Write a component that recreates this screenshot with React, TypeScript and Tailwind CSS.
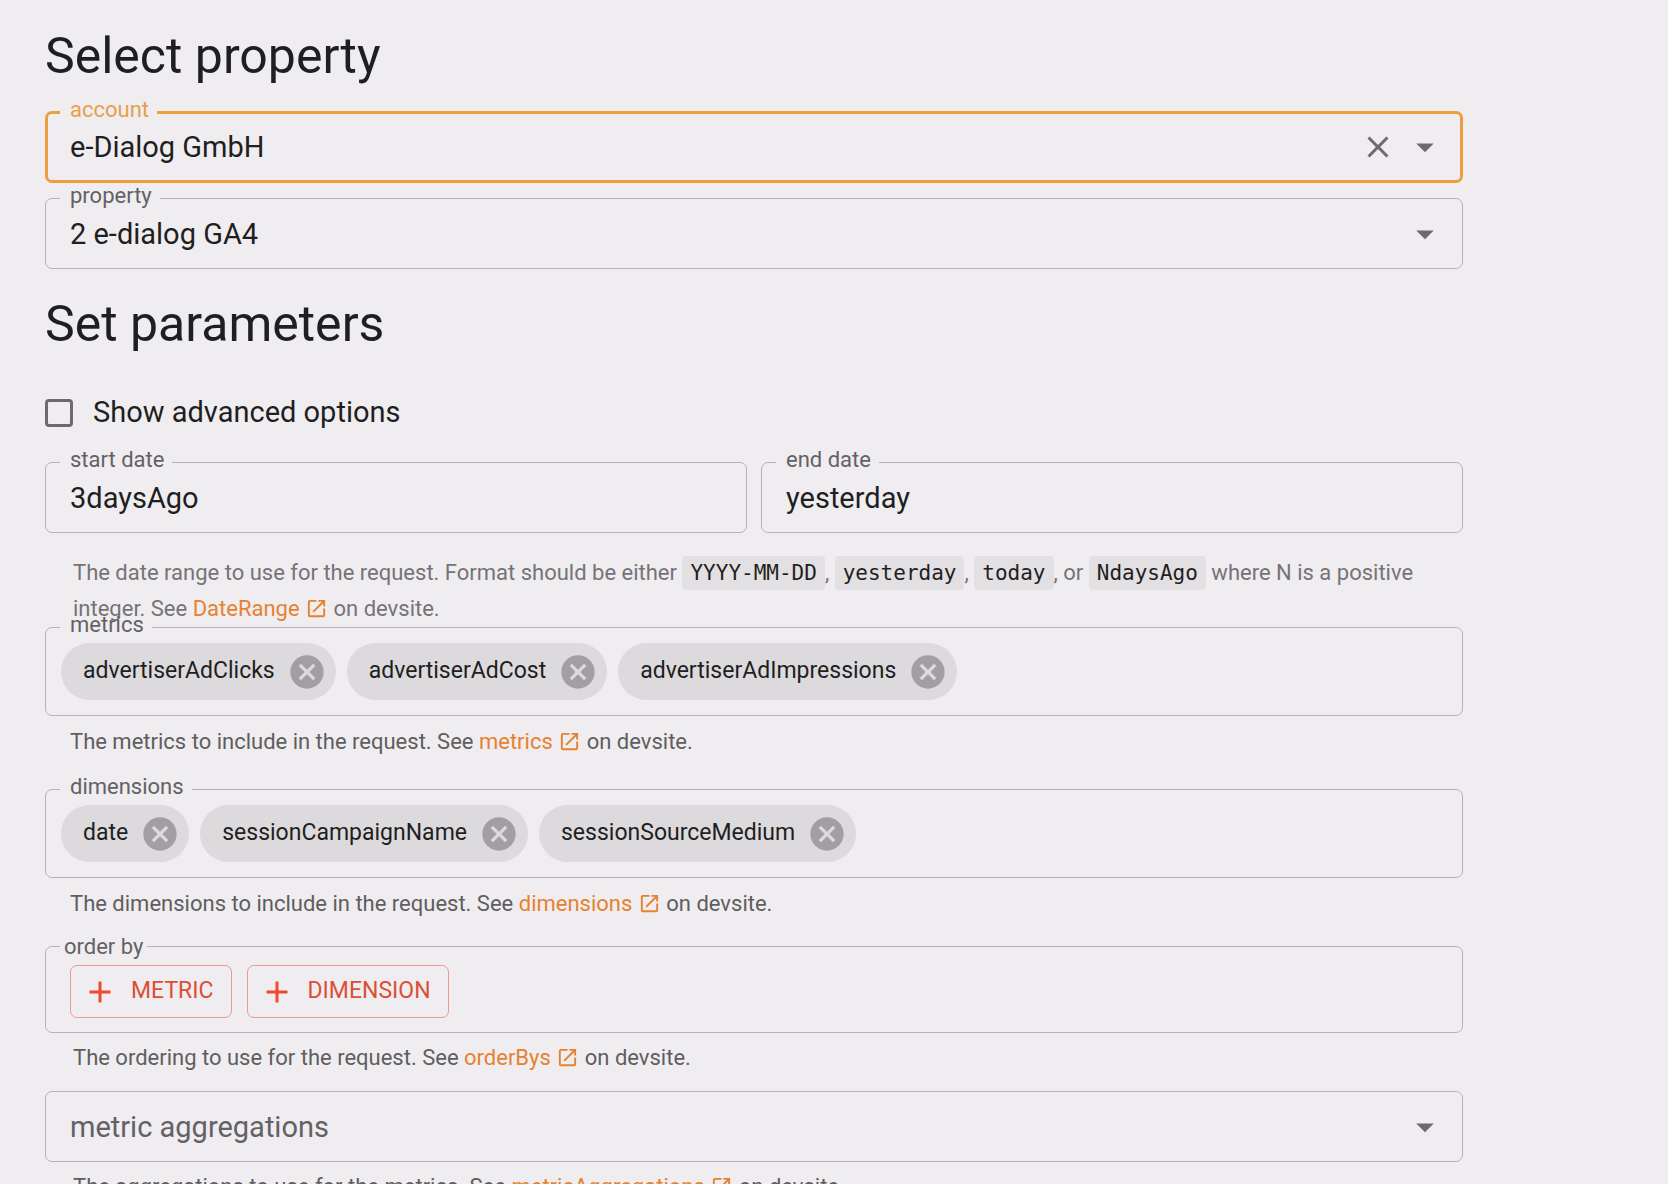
import React, { FC, ReactNode, useState } from "react";
import clsx from "clsx";

type IconProps = { d: string; className: string };

const Icon: FC<IconProps> = ({ d, className }) => (
  <svg
    viewBox="0 0 24 24"
    fill="currentColor"
    aria-hidden="true"
    className={className}
  >
    <path d={d} />
  </svg>
);

const icons = {
  close:
    "M19 6.41L17.59 5 12 10.59 6.41 5 5 6.41 10.59 12 5 17.59 6.41 19 12 13.41 17.59 19 19 17.59 13.41 12z",
  dropdown: "M7 10l5 5 5-5z",
  cancel:
    "M12 2C6.47 2 2 6.47 2 12s4.47 10 10 10 10-4.47 10-10S17.53 2 12 2zm5 13.59L15.59 17 12 13.41 8.41 17 7 15.59 10.59 12 7 8.41 8.41 7 12 10.59 15.59 7 17 8.41 13.41 12 17 15.59z",
  launch:
    "M19 19H5V5h7V3H5c-1.11 0-2 .9-2 2v14c0 1.1.89 2 2 2h14c1.1 0 2-.9 2-2v-7h-2v7zM14 3v2h3.59l-9.83 9.83 1.41 1.41L19 6.41V10h2V3h-7z",
  add: "M19 13h-6v6h-2v-6H5v-2h6V5h2v6h6v2z",
};

type OutlineProps = {
  id: string;
  label?: string;
  active?: boolean;
  children: ReactNode;
};

// Outlined box with the label sitting in a notch of the top border
const Outline: FC<OutlineProps> = ({ id, label, active, children }) => (
  <fieldset
    className={clsx(
      "min-w-0 rounded-[7px]",
      active
        ? "border-3 border-[#ed9f3f] pr-[14px] pl-3"
        : "border border-[#b5b3b6] pr-4 pl-[14px]"
    )}
  >
    {label && (
      <legend className="h-0 pl-[10px] pr-2 leading-[0]">
        <label
          htmlFor={id}
          className={clsx(
            "-mt-[3px] block text-[22px]",
            active ? "text-[#e6a04c]" : "text-[#636165]"
          )}
        >
          {label}
        </label>
      </legend>
    )}
    {children}
  </fieldset>
);

type FieldProps = {
  id: string;
  label: string;
  initial?: string;
  placeholder?: string;
  active?: boolean;
  combo?: boolean;
};

const Field: FC<FieldProps> = ({
  id,
  label,
  initial = "",
  placeholder,
  active,
  combo,
}) => {
  const [value, setValue] = useState(initial);

  return (
    <Outline id={id} label={placeholder ? undefined : label} active={active}>
      <div
        className={clsx(
          "flex items-center gap-2 text-[#6c6a6e]",
          active ? "h-[66px]" : "h-[69px]"
        )}
      >
        <input
          id={id}
          type="text"
          role={combo ? "combobox" : undefined}
          aria-expanded={combo ? false : undefined}
          aria-label={placeholder ? label : undefined}
          placeholder={placeholder}
          value={value}
          onChange={(e) => setValue(e.target.value)}
          className="h-full min-w-0 flex-1 bg-transparent pl-[10px] text-[29px] text-[#1f1e21] outline-none placeholder:text-[#636165]"
        />
        {active && (
          <button type="button" aria-label="Clear" onClick={() => setValue("")}>
            <Icon d={icons.close} className="size-9" />
          </button>
        )}
        {combo && (
          <button type="button" aria-label="Open">
            <Icon d={icons.dropdown} className="size-[42px]" />
          </button>
        )}
      </div>
    </Outline>
  );
};

type ChipFieldProps = { id: string; label: string; initial: string[] };

const ChipField: FC<ChipFieldProps> = ({ id, label, initial }) => {
  const [chips, setChips] = useState(initial);

  return (
    <Outline id={id} label={label}>
      <div className="flex flex-wrap gap-[11px] py-[15px] pl-px">
        {chips.map((chip) => (
          <span
            key={chip}
            className="flex h-[57px] items-center rounded-full bg-[#dcdadd] pr-[9px] pl-[22px] text-[23px] text-[#1f1e21]"
          >
            {chip}
            <button
              type="button"
              aria-label={`Remove ${chip}`}
              className="ml-3 text-[#a19fa2]"
              onClick={() => setChips(chips.filter((c) => c !== chip))}
            >
              <Icon d={icons.cancel} className="size-10" />
            </button>
          </span>
        ))}
        <input
          id={id}
          type="text"
          className="min-w-0 flex-1 bg-transparent text-[29px] outline-none"
        />
      </div>
    </Outline>
  );
};

const DocLink: FC<{ children: ReactNode }> = ({ children }) => (
  <a href="#" className="text-[#e6822f]">
    {children}{" "}
    <Icon d={icons.launch} className="inline size-[23px] align-[-4px]" />
  </a>
);

const Code: FC<{ children: ReactNode }> = ({ children }) => (
  <code className="rounded-[4px] bg-[#e2e0e3] px-2 py-[5px] font-['DejaVu_Sans_Mono',monospace] text-[21px] leading-none text-[#1f1e21]">
    {children}
  </code>
);

type HelperProps = { className: string; children: ReactNode };

const Helper: FC<HelperProps> = ({ className, children }) => (
  <p className={clsx("text-[22px] leading-9", className)}>{children}</p>
);

const Heading: FC<{ children: ReactNode }> = ({ children }) => (
  <h2 className="my-[25px] text-[50px] leading-[60px]">{children}</h2>
);

const AddButton: FC<{ children: ReactNode }> = ({ children }) => (
  <button
    type="button"
    className="flex h-[53px] items-center gap-[13px] rounded-[7px] border border-[#e99b90] pr-[17px] pl-[11px] text-[23px] text-[#dd4f35] uppercase"
  >
    <Icon d={icons.add} className="size-9 text-[#f04a2d]" />
    {children}
  </button>
);

const App: FC = () => {
  const [advanced, setAdvanced] = useState(false);

  return (
    <div className="h-screen overflow-y-auto bg-[#efedf0] font-[Roboto,sans-serif] text-[#1f1e21]">
      <form className="flow-root pt-px pr-[205px] pb-6 pl-[45px]">
        <Heading>Select property</Heading>
        <div className="grid gap-[15px]">
          <Field
            id="account"
            label="account"
            initial="e-Dialog GmbH"
            active
            combo
          />
          <Field
            id="property"
            label="property"
            initial="2 e-dialog GA4"
            combo
          />
        </div>

        <Heading>Set parameters</Heading>
        <label className="mt-[38px] mb-7 flex h-[42px] w-fit items-center gap-5 text-[29px]">
          <input
            type="checkbox"
            checked={advanced}
            onChange={(e) => setAdvanced(e.target.checked)}
            className="size-7 appearance-none rounded-[4px] border-3 border-[#6c6a6e] checked:bg-[#ed9f3f]"
          />
          Show advanced options
        </label>

        <div className="grid grid-cols-2 gap-[14px]">
          <Field id="start-date" label="start date" initial="3daysAgo" />
          <Field id="end-date" label="end date" initial="yesterday" />
        </div>
        <Helper className="mt-[22px] px-7 text-[#757377]">
          The date range to use for the request. Format should be either{" "}
          <Code>YYYY-MM-DD</Code>, <Code>yesterday</Code>, <Code>today</Code>,
          or <Code>NdaysAgo</Code> where N is a positive integer. See{" "}
          <DocLink>DateRange</DocLink> on devsite.
        </Helper>

        <ChipField
          id="metrics"
          label="metrics"
          initial={[
            "advertiserAdClicks",
            "advertiserAdCost",
            "advertiserAdImpressions",
          ]}
        />
        <Helper className="mt-2 px-[25px] text-[#5f5d60]">
          The metrics to include in the request. See <DocLink>metrics</DocLink>{" "}
          on devsite.
        </Helper>

        <div className="mt-[29px]">
          <ChipField
            id="dimensions"
            label="dimensions"
            initial={["date", "sessionCampaignName", "sessionSourceMedium"]}
          />
        </div>
        <Helper className="mt-2 px-[25px] text-[#5f5d60]">
          The dimensions to include in the request. See{" "}
          <DocLink>dimensions</DocLink> on devsite.
        </Helper>

        <fieldset className="mt-6 min-w-0 rounded-[7px] border border-[#b5b3b6] px-[14px]">
          <legend className="h-0 px-1 text-[22px] leading-[0] text-[#636165]">
            order by
          </legend>
          <div className="flex gap-[15px] pt-[18px] pb-[14px] pl-[10px]">
            <AddButton>metric</AddButton>
            <AddButton>dimension</AddButton>
          </div>
        </fieldset>
        <Helper className="mt-[7px] px-7 text-[#5f5d60]">
          The ordering to use for the request. See <DocLink>orderBys</DocLink>{" "}
          on devsite.
        </Helper>

        <div className="mt-[15px]">
          <Field
            id="metric-aggregations"
            label="metric aggregations"
            placeholder="metric aggregations"
            combo
          />
        </div>
        <Helper className="mt-[7px] px-7 text-[#5f5d60]">
          The aggregations to use for the metrics. See{" "}
          <DocLink>metricAggregations</DocLink> on devsite.
        </Helper>
      </form>
    </div>
  );
};

export default App;
